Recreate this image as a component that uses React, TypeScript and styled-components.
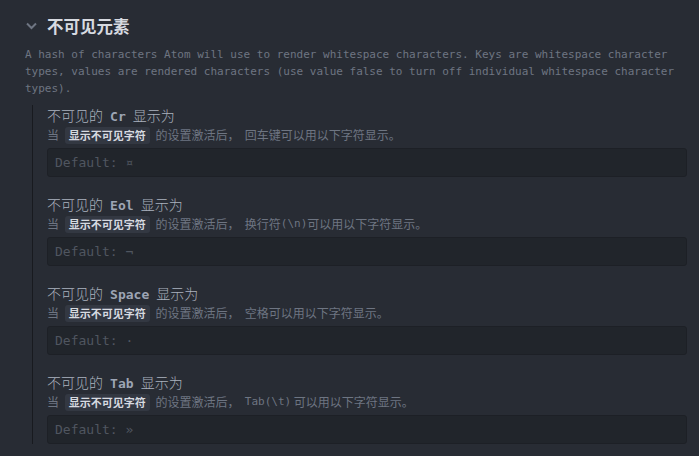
import styled, { createGlobalStyle } from 'styled-components';

const GlobalStyle = createGlobalStyle`
  html, body {
    margin: 0;
    padding: 0;
    background: #282c34;
  }
  body {
    font-family: "Noto Sans CJK SC", "Noto Sans", sans-serif;
    color: #9da5b4;
  }
`;

const Page = styled.div`
  padding: 14px 12px 0 25px;
  height: 456px;
  box-sizing: border-box;
  overflow: hidden;
`;

const Header = styled.div`
  display: flex;
  align-items: center;
  gap: 10px;
  height: 24px;
  padding-left: 1px;
`;

const Title = styled.h1`
  margin: 0;
  font-size: 16.5px;
  font-weight: 700;
  color: #d7dae0;
  line-height: 24px;
`;

const Description = styled.p`
  margin: 8px 0 0;
  font-family: "DejaVu Sans Mono", monospace;
  font-size: 11px;
  line-height: 17px;
  color: #6e7582;
`;

const Group = styled.div`
  margin: 8px 0 0 7px;
  padding-left: 14px;
  border-left: 1px solid #181a1f;
`;

const Item = styled.div`
  display: flex;
  flex-direction: column;
  padding-bottom: 17px;

  &:last-child {
    padding-bottom: 0;
  }
`;

const ItemTitle = styled.div`
  height: 20px;
  font-size: 14px;
  font-weight: 300;
  line-height: 20px;
  color: #abb2bf;
  white-space: pre;
`;

const Mono = styled.span`
  padding: 0 4px;
  font-family: "DejaVu Sans Mono", monospace;
  font-size: 13px;
  font-weight: 700;
  color: #9da5b4;
`;

const ItemDesc = styled.div`
  height: 20px;
  display: flex;
  align-items: center;
  font-size: 12px;
  line-height: 20px;
  color: #6e7582;
  white-space: pre;
`;

const DescMono = styled.span`
  font-family: "DejaVu Sans Mono", monospace;
  font-size: 11px;
`;

const Badge = styled.span`
  display: inline-block;
  margin: 0 3px 0 3px;
  padding: 0 4px;
  height: 17px;
  line-height: 17px;
  font-size: 11px;
  font-weight: 700;
  color: #d7dae0;
  background: #333842;
  border-radius: 3px;
`;

const Input = styled.div`
  margin-top: 3px;
  height: 29px;
  box-sizing: border-box;
  display: flex;
  align-items: center;
  padding-left: 7px;
  background: #21252b;
  border: 1px solid #1d2026;
  border-radius: 3px;
  font-family: "DejaVu Sans Mono", monospace;
  font-size: 13px;
  color: #505660;
`;

const Chevron = () => (
  <svg width="11" height="8" viewBox="0 0 11 8">
    <path d="M1 1.5 L5.5 6 L10 1.5" fill="none" stroke="#6e7582" strokeWidth="2" />
  </svg>
);

const items = [
  { key: 'Cr', def: '¤', text: <>回车键可以用以下字符显示。</> },
  { key: 'Eol', def: '¬', text: <>换行符<DescMono>(\n)</DescMono>可以用以下字符显示。</> },
  { key: 'Space', def: '·', text: <>空格可以用以下字符显示。</> },
  { key: 'Tab', def: '»', text: <><DescMono>Tab(\t)</DescMono> 可以用以下字符显示。</> },
];

export default function App() {
  return (
    <Page>
      <GlobalStyle />
      <Header>
        <Chevron />
        <Title>不可见元素</Title>
      </Header>
      <Description>
        A hash of characters Atom will use to render whitespace characters. Keys are whitespace character
        types, values are rendered characters (use value false to turn off individual whitespace character
        types).
      </Description>
      <Group>
        {items.map((it) => (
          <Item key={it.key}>
            <ItemTitle>
              不可见的 <Mono>{it.key}</Mono> 显示为
            </ItemTitle>
            <ItemDesc>
              当 <Badge>显示不可见字符</Badge> 的设置激活后，  {it.text}
            </ItemDesc>
            <Input>Default: {it.def}</Input>
          </Item>
        ))}
      </Group>
    </Page>
  );
}
